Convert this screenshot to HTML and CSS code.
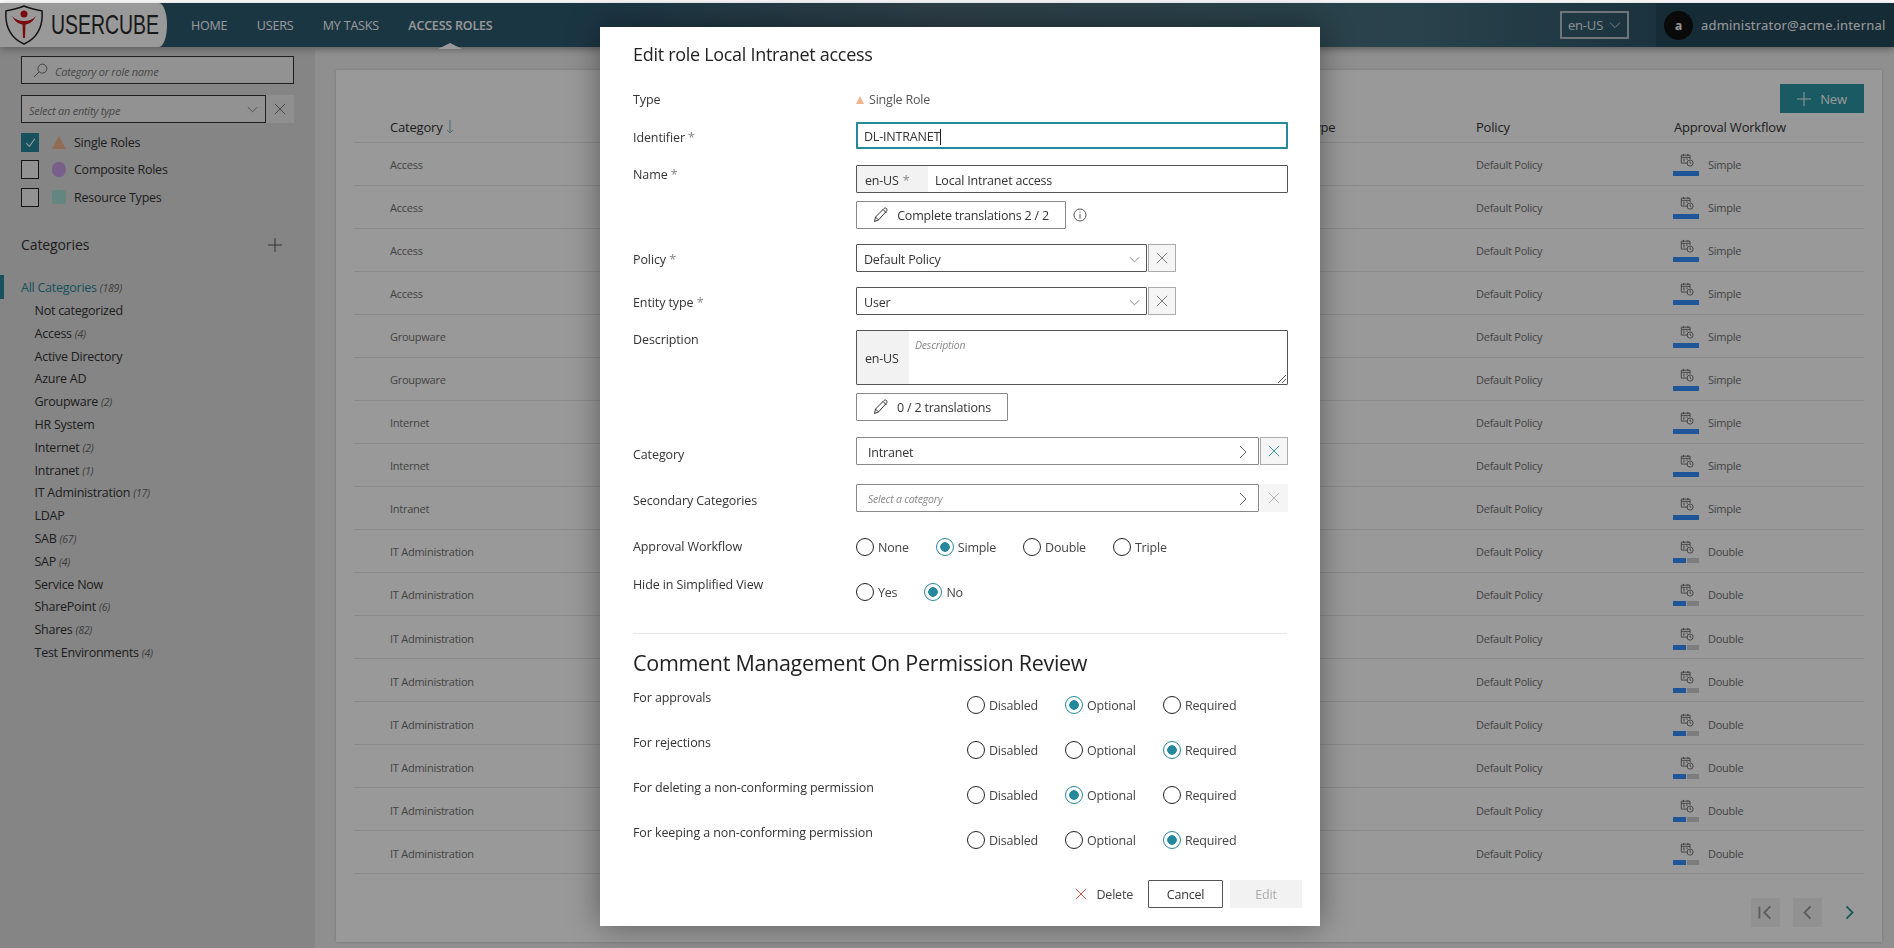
FILE: index.html
```html
<!DOCTYPE html>
<html lang="en">
<head>
    <meta charset="UTF-8">
    <title>Edit role Local Intranet access</title>
    <link rel="stylesheet" href="styles.css">
</head>
<body>

<svg class="sprite" width="0" height="0">
    <symbol id="i-x" viewBox="0 0 14 14"><path d="M1 1l12 12M13 1L1 13" fill="none" stroke="currentColor"/></symbol>
    <symbol id="i-down" viewBox="0 0 14 8"><path d="M1 1l6 6 6-6" fill="none" stroke="currentColor"/></symbol>
    <symbol id="i-right" viewBox="0 0 8 14"><path d="M1 1l6 6-6 6" fill="none" stroke="currentColor"/></symbol>
    <symbol id="i-plus" viewBox="0 0 14 14"><path d="M7 0v14M0 7h14" fill="none" stroke="currentColor"/></symbol>
    <symbol id="i-pencil" viewBox="0 0 16 16"><path d="M1.5 14.5l1-4.5L11 1.5c.8-.7 1.800-.7 2.500 0s.7 1.700 0 2.500L5.500 13zM2.500 10l3 3M10 2.500l3.500 3.500" fill="none" stroke="currentColor"/></symbol>
    <symbol id="i-cal" viewBox="0 0 16 16"><path d="M9 11.500H1.500V2.500h10V7M1.500 5h10M4 1v2.500M9 1v2.500M3.500 7h2M7 7h2M3.500 9h2" fill="none" stroke="currentColor"/><circle cx="11.500" cy="11.500" r="3.500" fill="none" stroke="currentColor"/><path d="M11.500 9.500v2l1.500 .8" fill="none" stroke="currentColor"/></symbol>
</svg>

<div class="topbar">
    <div class="brand">
        <svg class="brand-mark" viewBox="0 0 40 40">
            <path d="M20 1c6 2.500 12 3.500 18 5 1 13-3 26-18 33C5 32 1 19 2 6c6-1.500 12-2.500 18-5z" fill="none" stroke="#222" stroke-width="1.500"/>
            <circle cx="20" cy="9" r="3.500" fill="#c8141c"/>
            <path d="M8 11c3 6 7 8 10.500 8.500L19 33h2l.5-13.500C25 19 29 17 32 11c-3 3.500-7 5-12 5s-9-1.500-12-5z" fill="#c8141c"/>
        </svg>
        <span class="brand-name">USERCUBE</span>
    </div>
    <nav class="nav">
        <a>HOME</a>
        <a>USERS</a>
        <a>MY TASKS</a>
        <a class="active">ACCESS ROLES</a>
    </nav>
    <div class="lang">en-US <svg><use href="#i-down"/></svg></div>
    <div class="user">
        <span class="avatar">a</span>
        <span class="email">administrator@acme.internal</span>
    </div>
</div>

<div class="page">
    <aside class="sidebar">
        <div class="search">
            <svg viewBox="0 0 16 16"><circle cx="10" cy="6" r="4.800" fill="none" stroke="currentColor"/><path d="M6.500 9.500L1 15" fill="none" stroke="currentColor"/></svg>
            <span>Category or role name</span>
        </div>
        <div class="type-select">
            <div class="select-box"><span>Select an entity type</span><svg><use href="#i-down"/></svg></div>
            <div class="clear"><svg><use href="#i-x"/></svg></div>
        </div>
        <ul class="filters">
            <li><span class="check on"><svg viewBox="0 0 12 12"><path d="M2 6.500l3 3 5-7" fill="none" stroke="#fff"/></svg></span><i class="tri"></i>Single Roles</li>
            <li><span class="check"></span><i class="blob"></i>Composite Roles</li>
            <li><span class="check"></span><i class="square"></i>Resource Types</li>
        </ul>
        <div class="cat-head">Categories <svg><use href="#i-plus"/></svg></div>
        <div class="cat-all">All Categories <em>(189)</em></div>
        <ul class="cats">
            <li>Not categorized</li>
            <li>Access <em>(4)</em></li>
            <li>Active Directory</li>
            <li>Azure AD</li>
            <li>Groupware <em>(2)</em></li>
            <li>HR System</li>
            <li>Internet <em>(2)</em></li>
            <li>Intranet <em>(1)</em></li>
            <li>IT Administration <em>(17)</em></li>
            <li>LDAP</li>
            <li>SAB <em>(67)</em></li>
            <li>SAP <em>(4)</em></li>
            <li>Service Now</li>
            <li>SharePoint <em>(6)</em></li>
            <li>Shares <em>(82)</em></li>
            <li>Test Environments <em>(4)</em></li>
        </ul>
    </aside>

    <main class="main">
        <section class="card">
            <div class="card-top"><button class="new"><svg><use href="#i-plus"/></svg>New</button></div>
            <div class="thead">
                <span class="sorted">Category <svg class="sort" viewBox="0 0 8 14"><path d="M4 0v13M1 10l3 3 3-3" fill="none" stroke="currentColor"/></svg></span><span></span><span>Entity Type</span><span>Policy</span><span>Approval Workflow</span>
            </div>
            <div class="trow"><span>Access</span><span></span><span>User</span><span>Default Policy</span><span class="flow"><span class="flow-ic"><svg><use href="#i-cal"/></svg><i class="bar"></i></span>Simple</span></div>
            <div class="trow"><span>Access</span><span></span><span>User</span><span>Default Policy</span><span class="flow"><span class="flow-ic"><svg><use href="#i-cal"/></svg><i class="bar"></i></span>Simple</span></div>
            <div class="trow"><span>Access</span><span></span><span>User</span><span>Default Policy</span><span class="flow"><span class="flow-ic"><svg><use href="#i-cal"/></svg><i class="bar"></i></span>Simple</span></div>
            <div class="trow"><span>Access</span><span></span><span>User</span><span>Default Policy</span><span class="flow"><span class="flow-ic"><svg><use href="#i-cal"/></svg><i class="bar"></i></span>Simple</span></div>
            <div class="trow"><span>Groupware</span><span></span><span>User</span><span>Default Policy</span><span class="flow"><span class="flow-ic"><svg><use href="#i-cal"/></svg><i class="bar"></i></span>Simple</span></div>
            <div class="trow"><span>Groupware</span><span></span><span>User</span><span>Default Policy</span><span class="flow"><span class="flow-ic"><svg><use href="#i-cal"/></svg><i class="bar"></i></span>Simple</span></div>
            <div class="trow"><span>Internet</span><span></span><span>User</span><span>Default Policy</span><span class="flow"><span class="flow-ic"><svg><use href="#i-cal"/></svg><i class="bar"></i></span>Simple</span></div>
            <div class="trow"><span>Internet</span><span></span><span>User</span><span>Default Policy</span><span class="flow"><span class="flow-ic"><svg><use href="#i-cal"/></svg><i class="bar"></i></span>Simple</span></div>
            <div class="trow"><span>Intranet</span><span></span><span>User</span><span>Default Policy</span><span class="flow"><span class="flow-ic"><svg><use href="#i-cal"/></svg><i class="bar"></i></span>Simple</span></div>
            <div class="trow"><span>IT Administration</span><span></span><span>User</span><span>Default Policy</span><span class="flow"><span class="flow-ic"><svg><use href="#i-cal"/></svg><i class="bar half"></i></span>Double</span></div>
            <div class="trow"><span>IT Administration</span><span></span><span>User</span><span>Default Policy</span><span class="flow"><span class="flow-ic"><svg><use href="#i-cal"/></svg><i class="bar half"></i></span>Double</span></div>
            <div class="trow"><span>IT Administration</span><span></span><span>User</span><span>Default Policy</span><span class="flow"><span class="flow-ic"><svg><use href="#i-cal"/></svg><i class="bar half"></i></span>Double</span></div>
            <div class="trow"><span>IT Administration</span><span></span><span>User</span><span>Default Policy</span><span class="flow"><span class="flow-ic"><svg><use href="#i-cal"/></svg><i class="bar half"></i></span>Double</span></div>
            <div class="trow"><span>IT Administration</span><span></span><span>User</span><span>Default Policy</span><span class="flow"><span class="flow-ic"><svg><use href="#i-cal"/></svg><i class="bar half"></i></span>Double</span></div>
            <div class="trow"><span>IT Administration</span><span></span><span>User</span><span>Default Policy</span><span class="flow"><span class="flow-ic"><svg><use href="#i-cal"/></svg><i class="bar half"></i></span>Double</span></div>
            <div class="trow"><span>IT Administration</span><span></span><span>User</span><span>Default Policy</span><span class="flow"><span class="flow-ic"><svg><use href="#i-cal"/></svg><i class="bar half"></i></span>Double</span></div>
            <div class="trow"><span>IT Administration</span><span></span><span>User</span><span>Default Policy</span><span class="flow"><span class="flow-ic"><svg><use href="#i-cal"/></svg><i class="bar half"></i></span>Double</span></div>
            <div class="pager">
                <button class="pg off"><svg viewBox="0 0 14 14"><path d="M2 2v10M11 2L6 7l5 5" fill="none" stroke="currentColor" stroke-width="1.500"/></svg></button>
                <button class="pg off"><svg viewBox="0 0 14 14"><path d="M9.500 2L4.500 7l5 5" fill="none" stroke="currentColor" stroke-width="1.500"/></svg></button>
                <button class="pg"><svg viewBox="0 0 14 14"><path d="M4.500 2l5 5-5 5" fill="none" stroke="currentColor" stroke-width="1.500"/></svg></button>
            </div>
        </section>
    </main>
</div>

<div class="overlay"></div>

<div class="modal">
    <h1>Edit role Local Intranet access</h1>

    <div class="frow m24 short">
        <label>Type</label>
        <div class="role-type"><i class="tri-sm"></i>Single Role</div>
    </div>
    <div class="frow m12">
        <label class="pt6">Identifier <b>*</b></label>
        <div class="field focus">DL-INTRANET<i class="caret"></i></div>
    </div>
    <div class="frow m16">
        <label>Name <b>*</b></label>
        <div>
            <div class="field prefixed"><span class="prefix wide">en-US <b>*</b></span><span class="val">Local Intranet access</span></div>
            <div class="tools">
                <button class="tool w210"><svg><use href="#i-pencil"/></svg>Complete translations 2 / 2</button>
                <svg class="info" viewBox="0 0 14 14"><circle cx="7" cy="7" r="6" fill="none" stroke="currentColor"/><path d="M7 6v4.500M7 3.500v1.200" fill="none" stroke="currentColor"/></svg>
            </div>
        </div>
    </div>
    <div class="frow">
        <label class="pt6">Policy <b>*</b></label>
        <div class="combo">
            <div class="field select">Default Policy<svg><use href="#i-down"/></svg></div>
            <div class="x-btn"><svg><use href="#i-x"/></svg></div>
        </div>
    </div>
    <div class="frow">
        <label class="pt6">Entity type <b>*</b></label>
        <div class="combo">
            <div class="field select">User<svg><use href="#i-down"/></svg></div>
            <div class="x-btn"><svg><use href="#i-x"/></svg></div>
        </div>
    </div>
    <div class="frow">
        <label>Description</label>
        <div>
            <div class="field area"><span class="prefix">en-US</span><span class="hint">Description</span>
                <svg class="grip" viewBox="0 0 10 10"><path d="M1 9l8-8M5 9l4-4" fill="none" stroke="#555"/></svg>
            </div>
            <div class="tools">
                <button class="tool w152"><svg><use href="#i-pencil"/></svg>0 / 2 translations</button>
            </div>
        </div>
    </div>
    <div class="frow m16">
        <label class="pt8">Category</label>
        <div class="pick">
            <div class="field picker">Intranet<svg><use href="#i-right"/></svg></div>
            <div class="x-btn teal"><svg><use href="#i-x"/></svg></div>
        </div>
    </div>
    <div class="frow m19">
        <label class="pt7">Secondary Categories</label>
        <div class="pick">
            <div class="field picker empty"><span class="hint">Select a category</span><svg><use href="#i-right"/></svg></div>
            <div class="x-btn off"><svg><use href="#i-x"/></svg></div>
        </div>
    </div>
    <div class="frow m25 short">
        <label>Approval Workflow</label>
        <div class="radios">
            <label class="radio"><input type="radio" name="wf">None</label>
            <label class="radio"><input type="radio" name="wf" checked>Simple</label>
            <label class="radio"><input type="radio" name="wf">Double</label>
            <label class="radio"><input type="radio" name="wf">Triple</label>
        </div>
    </div>
    <div class="frow m25 short">
        <label class="up">Hide in Simplified View</label>
        <div class="radios">
            <label class="radio"><input type="radio" name="hide">Yes</label>
            <label class="radio"><input type="radio" name="hide" checked>No</label>
        </div>
    </div>

    <hr>
    <h2>Comment Management On Permission Review</h2>

    <div class="crow first">
        <label class="up">For approvals</label>
        <div class="cradios">
            <label class="radio"><input type="radio" name="c1">Disabled</label>
            <label class="radio"><input type="radio" name="c1" checked>Optional</label>
            <label class="radio"><input type="radio" name="c1">Required</label>
        </div>
    </div>
    <div class="crow">
        <label class="up">For rejections</label>
        <div class="cradios">
            <label class="radio"><input type="radio" name="c2">Disabled</label>
            <label class="radio"><input type="radio" name="c2">Optional</label>
            <label class="radio"><input type="radio" name="c2" checked>Required</label>
        </div>
    </div>
    <div class="crow">
        <label class="up">For deleting a non-conforming permission</label>
        <div class="cradios">
            <label class="radio"><input type="radio" name="c3">Disabled</label>
            <label class="radio"><input type="radio" name="c3" checked>Optional</label>
            <label class="radio"><input type="radio" name="c3">Required</label>
        </div>
    </div>
    <div class="crow">
        <label class="up">For keeping a non-conforming permission</label>
        <div class="cradios">
            <label class="radio"><input type="radio" name="c4">Disabled</label>
            <label class="radio"><input type="radio" name="c4">Optional</label>
            <label class="radio"><input type="radio" name="c4" checked>Required</label>
        </div>
    </div>

    <div class="actions">
        <button class="delete"><svg><use href="#i-x"/></svg>Delete</button>
        <button class="cancel">Cancel</button>
        <button class="edit">Edit</button>
    </div>
</div>

</body>
</html>
```

FILE: styles.css
```css
* {
    box-sizing: border-box;
}

html, body {
    margin: 0;
    height: 948px;
    overflow: hidden;
    background: #fff;
}

body {
    font-family: "Open Sans", "Noto Sans", sans-serif;
    font-size: 12.5px;
    letter-spacing: -0.2px;
    color: #333;
}

ul {
    list-style: none;
    margin: 0;
    padding: 0;
}

button {
    font: inherit;
    letter-spacing: inherit;
    cursor: pointer;
}

.sprite {
    position: absolute;
}

/* top bar */
.topbar {
    margin-top: 3px;
    height: 44px;
    display: flex;
    align-items: center;
    background: linear-gradient(90deg, #2d5a71 0, #2d5a71 30%, #4d6a78 50%, #44707f 75%, #2b5468 88%, #274f63 100%);
    box-shadow: 0 2px 8px rgba(0, 0, 0, .3);
    position: relative;
}

.brand {
    width: 167px;
    height: 44px;
    background: #fff;
    border-radius: 0 8px 8px 0 / 0 50% 50% 0;
    display: flex;
    align-items: center;
    padding-left: 4px;
    flex: none;
}

.brand-mark {
    width: 40px;
    height: 40px;
    flex: none;
}

.brand-name {
    font-family: "Liberation Sans", sans-serif;
    font-size: 28px;
    letter-spacing: 0;
    color: #2a2a2a;
    margin-left: 7px;
    flex: none;
    transform: scaleX(.694);
    transform-origin: left center;
}

.nav {
    display: flex;
    gap: 29.5px;
    margin-left: 24px;
    height: 44px;
    align-items: center;
    color: #fff;
    font-size: 12.5px;
}

.nav a {
    position: relative;
}

.nav .active {
    font-weight: 600;
}

.nav .active::after {
    content: "";
    position: absolute;
    left: 50%;
    bottom: -15px;
    margin-left: -12px;
    border: 12px solid transparent;
    border-top: 0;
    border-bottom: 6px solid #fff;
}

.lang {
    margin-left: auto;
    width: 69px;
    height: 28px;
    border: 2px solid #b7c2c7;
    color: #e8eef0;
    font-size: 13px;
    display: flex;
    align-items: center;
    justify-content: space-between;
    padding: 0 6px;
}

.lang svg {
    width: 12px;
    height: 8px;
}

.user {
    width: 238px;
    height: 44px;
    padding-left: 8px;
    display: flex;
    align-items: center;
    gap: 8px;
    margin-left: 27px;
    background: #23485b;
}

.avatar {
    width: 29px;
    height: 29px;
    border-radius: 50%;
    background: #111;
    color: #fff;
    font-weight: 700;
    font-size: 12px;
    display: flex;
    align-items: center;
    justify-content: center;
    flex: none;
}

.email {
    font-family: "Noto Sans", sans-serif;
    font-size: 13px;
    letter-spacing: .2px;
    color: #fff;
    white-space: nowrap;
}

/* page */
.page {
    display: flex;
    height: 901px;
}

.sidebar {
    width: 315px;
    flex: none;
    background: #dedede;
    padding: 9px 21px 0;
    letter-spacing: -0.25px;
}

.search {
    height: 28px;
    border: 1px solid #333;
    background: #f4f4f4;
    display: flex;
    align-items: center;
    padding-left: 11px;
    gap: 7px;
    color: #666;
}

.search svg {
    width: 15px;
    height: 15px;
}

.search span,
.select-box span {
    font-style: italic;
    font-size: 11px;
    color: #777;
    padding-top: 2px;
}

.type-select {
    display: flex;
    margin-top: 11px;
    height: 28px;
}

.select-box {
    flex: 1;
    border: 1px solid #333;
    background: #f4f4f4;
    display: flex;
    align-items: center;
    justify-content: space-between;
    padding: 0 7px;
    color: #666;
}

.select-box svg {
    width: 11px;
    height: 7px;
}

.clear {
    width: 28px;
    background: #eee;
    color: #666;
    display: flex;
    align-items: center;
    justify-content: center;
}

.clear svg {
    width: 12px;
    height: 12px;
}

.filters {
    margin-top: 10px;
}

.filters li {
    height: 18px;
    margin-bottom: 9.5px;
    display: flex;
    align-items: center;
}

.check {
    width: 18px;
    height: 19px;
    border: 1px solid #222;
    background: #f4f4f4;
    margin-right: 13px;
    display: flex;
    align-items: center;
    justify-content: center;
}

.check.on {
    background: #25889c;
    border-color: #25889c;
}

.check svg {
    width: 13px;
    height: 13px;
}

.tri {
    width: 0;
    height: 0;
    border: 7px solid transparent;
    border-top: 0;
    border-bottom: 13px solid #f0b48e;
    margin-right: 8px;
}

.blob {
    width: 14px;
    height: 15px;
    border-radius: 45%;
    background: #c9a0e6;
    margin-right: 8px;
}

.square {
    width: 14px;
    height: 14px;
    border-radius: 2px;
    background: #a6e0d8;
    margin-right: 8px;
}

.cat-head {
    margin-top: 28.5px;
    height: 20px;
    display: flex;
    align-items: center;
    justify-content: space-between;
    font-size: 14px;
    font-weight: 500;
    letter-spacing: -0.1px;
    color: #333;
    padding-right: 12px;
}

.cat-head svg {
    width: 14px;
    height: 14px;
    color: #555;
}

.cat-all {
    margin: 20.5px 0 1px -21px;
    height: 24px;
    padding-left: 17px;
    line-height: 26px;
    border-left: 4px solid #25889c;
    color: #25889c;
}

em {
    font-size: 10.5px;
    color: #666;
}

.cats {
    padding-left: 13.5px;
}

.cats li {
    height: 22.8px;
    line-height: 22.8px;
}

.main {
    flex: 1;
    background: #efefef;
    padding: 23px 12px 6px 21px;
    box-shadow: inset 0 6px 6px -6px rgba(0, 0, 0, .15);
}

.card {
    height: 872px;
    background: #fff;
    box-shadow: 0 0 3px rgba(0, 0, 0, .2);
    padding: 0 18px;
}

.card-top {
    height: 47px;
    padding-top: 14px;
    display: flex;
    justify-content: flex-end;
}

.new {
    width: 84px;
    height: 29px;
    border: 0;
    background: #2c97a4;
    color: #fff;
    display: flex;
    align-items: center;
    justify-content: center;
    gap: 9px;
    font-size: 13px;
}

.new svg {
    width: 14px;
    height: 14px;
}

.thead,
.trow {
    display: grid;
    grid-template-columns: 446px 471px 205px 198px 190px;
    border-bottom: 1px solid #e6e6e6;
    align-items: center;
}

.thead {
    height: 25.5px;
    padding-bottom: 5px;
    font-size: 13px;
    color: #333;
}

.thead > span:first-child,
.trow > span:first-child {
    padding-left: 36px;
}

.sorted {
    display: flex;
    align-items: center;
    gap: 4px;
}

.sort {
    width: 8px;
    height: 14px;
    color: #7fb6c2;
}

.trow {
    height: 43.05px;
    padding-top: 2px;
    font-size: 11px;
    letter-spacing: -0.25px;
    color: #707070;
}

.flow {
    display: flex;
    align-items: center;
    gap: 9px;
}

.flow-ic {
    width: 26px;
    display: block;
    margin-left: -1px;
}

.flow-ic svg {
    width: 14px;
    height: 14px;
    display: block;
    margin-left: 7px;
    color: #666;
}

.bar {
    display: block;
    height: 5px;
    margin-top: 4px;
    background: #3590ff;
}

.bar.half {
    background: linear-gradient(90deg, #3590ff 0, #3590ff 13px, transparent 13px, transparent 14px, #d0d0d0 14px);
}

.pager {
    display: flex;
    justify-content: flex-end;
    gap: 13px;
    margin-top: 24px;
}

.pg {
    width: 29px;
    height: 29px;
    border: 0;
    background: none;
    color: #2c97a4;
    padding: 6px;
}

.pg.off {
    background: #f2f2f2;
    color: #999;
}

/* dim layer and dialog */
.overlay {
    position: fixed;
    left: 0;
    right: 0;
    top: 3px;
    bottom: 0;
    background: rgba(0, 0, 0, .4);
}

.modal {
    position: absolute;
    left: 600px;
    top: 27px;
    width: 720px;
    height: 899px;
    background: #fff;
    padding: 15px 33px 0;
    box-shadow: 0 0 30px rgba(0, 0, 0, .4);
    color: #333;
}

h1 {
    margin: 0;
    font-size: 18px;
    font-weight: 500;
    line-height: 24px;
    letter-spacing: -0.3px;
    color: #222;
}

h2 {
    margin: 14px 0 0;
    font-size: 21.5px;
    font-weight: 500;
    line-height: 30px;
    letter-spacing: -0.3px;
    color: #222;
}

hr {
    border: 0;
    border-top: 1px solid #e8e8e8;
    margin: 31px 0 0;
}

.frow {
    display: grid;
    grid-template-columns: 223px 432px;
    margin-top: 15px;
}

.frow > label,
.crow > label {
    line-height: 20px;
    letter-spacing: -0.1px;
}

.frow b,
.prefix b {
    font-weight: 400;
    color: #888;
}

.m12 { margin-top: 12px; }
.m16 { margin-top: 16px; }
.m19 { margin-top: 19px; }
.m24 { margin-top: 24px; }
.m25 { margin-top: 25px; }
.pt6 { padding-top: 6px; }
.pt7 { padding-top: 7px; }
.pt8 { padding-top: 8px; }

.short {
    height: 20px;
}

.frow > .up,
.crow > .up {
    margin-top: -7px;
}

.role-type {
    display: flex;
    align-items: center;
    color: #555;
    line-height: 20px;
}

.tri-sm {
    width: 0;
    height: 0;
    border: 4px solid transparent;
    border-top: 0;
    border-bottom: 8px solid #f0b48e;
    margin-right: 5px;
}

.field {
    height: 28px;
    border: 1px solid #555;
    display: flex;
    align-items: center;
    padding: 2px 7px 0;
    border-radius: 1px;
    position: relative;
}

.focus {
    height: 27px;
    border: 2px solid #25889c;
    padding: 2px 6px 0;
}

.caret {
    width: 1px;
    height: 16px;
    background: #222;
}

.prefixed {
    padding: 0;
}

.prefix {
    align-self: stretch;
    display: flex;
    align-items: center;
    gap: 4px;
    padding: 2px 8px 0;
    background: #f2f2f2;
    flex: none;
    width: 52px;
}

.prefix.wide {
    width: 71px;
}

.val {
    margin: 2px 0 0 7px;
}

.tools {
    display: flex;
    align-items: center;
    margin-top: 8px;
}

.tool {
    height: 28px;
    border: 1px solid #888;
    background: #fff;
    color: #333;
    display: flex;
    align-items: center;
    justify-content: center;
    gap: 8px;
    border-radius: 1px;
}

.tool svg {
    width: 16px;
    height: 16px;
}

.w210 { width: 210px; }
.w152 { width: 152px; }

.info {
    width: 14px;
    height: 14px;
    margin-left: 7px;
    color: #555;
}

.combo {
    display: flex;
    width: 320px;
    height: 28px;
}

.select {
    flex: 1;
    justify-content: space-between;
}

.select svg {
    width: 11px;
    height: 7px;
    color: #666;
    margin-right: -1px;
}

.x-btn {
    width: 28px;
    height: 28px;
    flex: none;
    margin-left: 1px;
    border: 1px solid #aaa;
    background: #f5f5f5;
    color: #666;
    display: flex;
    align-items: center;
    justify-content: center;
}

.x-btn svg {
    width: 12px;
    height: 12px;
}

.x-btn.teal {
    color: #25889c;
}

.x-btn.off {
    border-color: #f5f5f5;
    color: #aaa;
}

.area {
    height: 55px;
    padding: 0;
    align-items: stretch;
}

.hint {
    font-style: italic;
    font-size: 10.5px;
    color: #888;
}

.area .hint {
    margin: 7px 0 0 6px;
}

.grip {
    position: absolute;
    right: 0;
    bottom: 0;
    width: 10px;
    height: 10px;
}

.pick {
    display: flex;
    height: 28px;
}

.picker {
    flex: 1;
    padding: 2px 11px 0;
    justify-content: space-between;
    border-color: #888;
}

.picker svg {
    width: 8px;
    height: 14px;
    color: #666;
}

.radios {
    display: flex;
    gap: 27px;
    height: 20px;
}

.radio {
    display: flex;
    align-items: center;
    gap: 4px;
    height: 20px;
    color: #444;
}

.radio input {
    appearance: none;
    -webkit-appearance: none;
    width: 18px;
    height: 18px;
    margin: 0;
    border: 1px solid #222;
    border-radius: 50%;
    background: #fff;
    flex: none;
}

.radio input:checked {
    border-color: #25889c;
    background: radial-gradient(circle, #25889c 0, #25889c 4.500px, #fff 5px);
}

.crow {
    display: grid;
    grid-template-columns: 334px 98px 98px 98px;
    margin-top: 25px;
    height: 20px;
}

.crow.first {
    margin-top: 17px;
}

.cradios {
    display: contents;
}

.actions {
    display: flex;
    justify-content: flex-end;
    align-items: center;
    gap: 7px;
    margin: 30px -15px 0 0;
    height: 28px;
}

.actions button {
    height: 28px;
    border: 0;
    background: none;
}

.delete {
    display: flex;
    align-items: center;
    gap: 9px;
    color: #444;
    margin-right: 8px;
    padding: 0;
}

.delete svg {
    width: 12px;
    height: 12px;
    color: #c0392b;
}

.actions .cancel {
    width: 75px;
    border: 1px solid #555;
    border-radius: 1px;
    color: #333;
}

.actions .edit {
    width: 72px;
    background: #f2f2f2;
    color: #aaa;
}
```
